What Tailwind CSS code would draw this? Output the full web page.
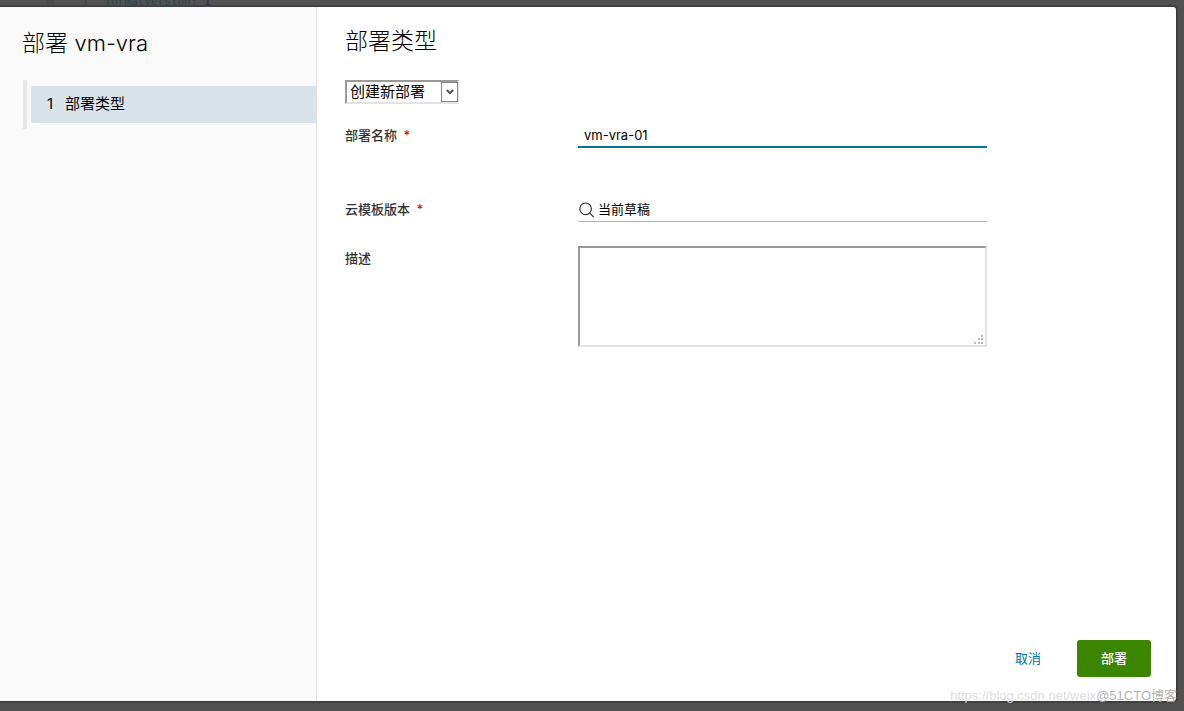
<!DOCTYPE html>
<html lang="zh-CN">
<head>
<meta charset="utf-8">
<meta name="viewport" content="width=device-width, initial-scale=1">
<title>部署 vm-vra</title>
<script src="https://cdn.jsdelivr.net/npm/@tailwindcss/browser@4"></script>
</head>
<body class="flex min-h-screen flex-col bg-[#515151] font-['Inter','Noto_Sans_CJK_SC',sans-serif] text-black">
  <!-- Editor behind the dialog -->
  <div class="flex h-[7px] items-end overflow-hidden bg-[#515151] font-['DejaVu_Sans_Mono',monospace] text-[11px] leading-[10px]" aria-hidden="true">
    <span class="ml-[46px] h-full w-2 bg-[#4b4b4b]"></span>
    <span class="ml-7 text-[#40484a]">1</span>
    <span class="ml-4 text-[#2c4450]">formatVersion: <span class="text-[#2b2b50]">1</span></span>
  </div>

  <section role="dialog" aria-labelledby="dialog-title" class="mr-2 mb-[10px] flex flex-1 overflow-hidden rounded-r-[3px] bg-white shadow-[0_0_2px_1px_#303030]">
    <aside class="w-[317px] shrink-0 border-r border-[#e3e3e3] bg-[#fafafa] pl-[22px]">
      <h1 id="dialog-title" class="pt-5 text-[23px] leading-8 font-light">部署 <span class="text-[22px]">vm-vra</span></h1>
      <nav class="mt-[21px] ml-px border-l-4 border-[#e8e8e8] py-[6px] pl-1">
        <button type="button" aria-current="step" class="flex h-[37px] w-full items-center gap-3 rounded-l-[3px] bg-[#d9e4ea] pl-4 text-left text-[15px]">
          <span>1</span><span>部署类型</span>
        </button>
      </nav>
    </aside>

    <main class="flex min-w-0 flex-1 flex-col pr-[25px] pb-6 pl-7">
      <h2 class="pt-[18px] text-[23px] leading-8 font-light">部署类型</h2>
      <form id="deploy" class="mt-[23px] text-[13px]">
        <div class="relative w-[114px]">
          <select aria-label="部署类型" class="block h-6 w-full appearance-none border-2 border-t-[#9a9a9a] border-r-[#e3e3e3] border-b-[#e3e3e3] border-l-[#9a9a9a] bg-white pl-[3px] text-[15px] leading-5">
            <option>创建新部署</option>
          </select>
          <span class="pointer-events-none absolute top-[2px] right-px flex h-5 w-[17px] items-center justify-center border border-[#858585] bg-white">
            <svg class="h-2 w-2" viewBox="0 0 8 8" fill="none" stroke="#505050" stroke-width="2"><path d="M.8 2 4 5.2 7.2 2"/></svg>
          </span>
        </div>

        <div class="mt-[18px] grid grid-cols-[233px_minmax(0,409px)] items-start">
          <label for="name" class="pt-[3px] leading-5 font-medium text-[#333]">部署名称 <span class="ml-[3px] text-[#c92100]">*</span></label>
          <input id="name" type="text" value="vm-vra-01" required class="h-[26px] border-b-2 border-[#0077a3] bg-white px-[6px] pt-[2px] outline-none">
        </div>

        <div class="mt-12 grid grid-cols-[233px_minmax(0,409px)] items-start">
          <label for="version" class="pt-[3px] leading-5 font-medium text-[#333]">云模板版本 <span class="ml-[3px] text-[#c92100]">*</span></label>
          <div class="flex h-[26px] items-center gap-1 border-b border-[#b3b3b3] pt-[2px]">
            <svg class="h-4 w-4 shrink-0" viewBox="0 0 16 16" fill="none" stroke="#333" stroke-width="1.2"><circle cx="7.6" cy="6.8" r="5.8"/><path d="m11.8 11.2 3.8 3.8"/></svg>
            <input id="version" type="text" value="当前草稿" required class="min-w-0 flex-1 bg-transparent outline-none">
          </div>
        </div>

        <div class="mt-6 grid grid-cols-[233px_minmax(0,409px)] items-start">
          <label for="description" class="pt-[2px] leading-5 font-medium text-[#333]">描述</label>
          <div class="relative">
            <textarea id="description" class="block h-[101px] w-full resize-none border-2 border-t-[#9a9a9a] border-r-[#e3e3e3] border-b-[#e3e3e3] border-l-[#9a9a9a] bg-white p-1 outline-none"></textarea>
            <svg class="pointer-events-none absolute right-1 bottom-[3px] h-[9px] w-[9px]" viewBox="0 0 9 9" fill="#b8b8b8"><path d="M7 0h2v2H7zM7 3h2v2H7zM7 7h2v2H7zM4 3h2v2H4zM4 7h2v2H4zM0 7h2v2H0z"/></svg>
          </div>
        </div>
      </form>

      <footer class="mt-auto flex justify-end gap-6 text-[13px]">
        <button type="button" class="h-[37px] px-3 text-[#0072a3]">取消</button>
        <button type="submit" form="deploy" class="h-[37px] w-[74px] rounded-[3px] bg-[#3c8500] font-medium text-white">部署</button>
      </footer>
    </main>
  </section>

  <div class="pointer-events-none absolute right-[7px] bottom-[5px] flex h-5 items-center font-['Liberation_Sans','Noto_Sans_CJK_SC',sans-serif] text-[13px] whitespace-nowrap">
    <span class="text-[#dedede]">https://blog.csdn.net/weix</span>
    <span class="text-[#b4b4b4]">@51CTO博客</span>
  </div>
</body>
</html>
